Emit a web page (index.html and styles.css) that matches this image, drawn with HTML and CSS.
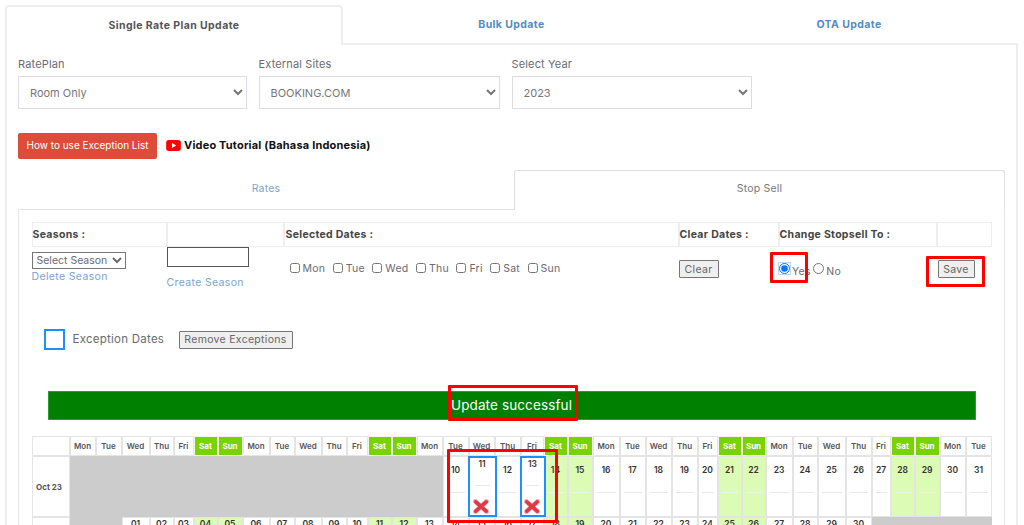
FILE: index.html
```html
<!DOCTYPE html>
<html lang="en">
<head>
<meta charset="utf-8">
<title>Rate Plan Update</title>
<link rel="stylesheet" href="styles.css">
</head>
<body>
<div class="page">
  <nav class="tabs">
    <a class="tab active">Single Rate Plan Update</a>
    <a class="tab">Bulk Update</a>
    <a class="tab">OTA Update</a>
  </nav>
  <section class="panel">
    <div class="filters">
      <label class="field"><span class="field-label">RatePlan</span>
        <select class="field-select"><option>Room Only</option></select></label>
      <label class="field"><span class="field-label">External Sites</span>
        <select class="field-select"><option>BOOKING.COM</option></select></label>
      <label class="field"><span class="field-label">Select Year</span>
        <select class="field-select"><option>2023</option></select></label>
    </div>
    <div class="tools">
      <button class="help-btn">How to use Exception List</button>
      <a class="video-link">
        <svg class="yt" viewBox="0 0 16 12" width="15" height="11"><rect width="16" height="12" rx="3" fill="#f00"/><path d="M6.3 3.3 11 6l-4.700 2.700z" fill="#fff"/></svg>
        Video Tutorial (Bahasa Indonesia)
      </a>
    </div>
    <div class="subtabs">
      <a class="subtab">Rates</a>
      <a class="subtab active">Stop Sell</a>
    </div>
    <div class="subpanel">
      <div class="form-table">
        <div class="th">Seasons :</div>
        <div class="th"></div>
        <div class="th th-dates">Selected Dates :</div>
        <div class="th">Clear Dates :</div>
        <div class="th">Change Stopsell To :</div>
        <div class="th"></div>
        <div class="td season-cell">
          <select class="season-select"><option>Select Season</option></select>
          <a class="link delete-link">Delete Season</a>
        </div>
        <div class="td create-cell">
          <input class="season-input" type="text">
          <a class="link create-link">Create Season</a>
        </div>
        <div class="td dates-cell">
          <label class="check"><input type="checkbox">Mon</label>
          <label class="check"><input type="checkbox">Tue</label>
          <label class="check"><input type="checkbox">Wed</label>
          <label class="check"><input type="checkbox">Thu</label>
          <label class="check"><input type="checkbox">Fri</label>
          <label class="check"><input type="checkbox">Sat</label>
          <label class="check"><input type="checkbox">Sun</label>
        </div>
        <div class="td btn-cell"><button class="plain-btn clear-btn">Clear</button></div>
        <div class="td radio-cell">
          <label class="radio"><input type="radio" name="stop" checked><span>Yes</span></label>
          <label class="radio"><input type="radio" name="stop"><span>No</span></label>
        </div>
        <div class="td btn-cell"><button class="plain-btn save-btn">Save</button></div>
      </div>

      <div class="legend">
        <span class="legend-box"></span>
        <span class="legend-text">Exception Dates</span>
        <button class="plain-btn remove-btn">Remove Exceptions</button>
      </div>

      <div class="banner">Update successful</div>

      <div class="calendar">
        <div class="c hd"></div>
        <div class="c hd">Mon</div><div class="c hd">Tue</div><div class="c hd">Wed</div><div class="c hd">Thu</div><div class="c hd">Fri</div><div class="c hd we">Sat</div><div class="c hd we">Sun</div>
        <div class="c hd">Mon</div><div class="c hd">Tue</div><div class="c hd">Wed</div><div class="c hd">Thu</div><div class="c hd">Fri</div><div class="c hd we">Sat</div><div class="c hd we">Sun</div>
        <div class="c hd">Mon</div><div class="c hd">Tue</div><div class="c hd">Wed</div><div class="c hd">Thu</div><div class="c hd">Fri</div><div class="c hd we">Sat</div><div class="c hd we">Sun</div>
        <div class="c hd">Mon</div><div class="c hd">Tue</div><div class="c hd">Wed</div><div class="c hd">Thu</div><div class="c hd">Fri</div><div class="c hd we">Sat</div><div class="c hd we">Sun</div>
        <div class="c hd">Mon</div><div class="c hd">Tue</div><div class="c hd">Wed</div><div class="c hd">Thu</div><div class="c hd">Fri</div><div class="c hd we">Sat</div><div class="c hd we">Sun</div>
        <div class="c hd">Mon</div><div class="c hd">Tue</div>

        <div class="c month">Oct 23</div>
        <div class="off span15"></div>
        <div class="c day"><b>10</b><i></i></div>
        <div class="c day exc"><b>11</b><i></i><svg class="x" viewBox="0 0 16 15" width="16" height="15"><use href="#cross"/></svg></div>
        <div class="c day"><b>12</b><i></i></div>
        <div class="c day exc"><b>13</b><i></i><svg class="x" viewBox="0 0 16 15" width="16" height="15"><use href="#cross"/></svg></div>
        <div class="c day wk"><b>14</b><i></i></div>
        <div class="c day wk"><b>15</b><i></i></div>
        <div class="c day"><b>16</b><i></i></div><div class="c day"><b>17</b><i></i></div><div class="c day"><b>18</b><i></i></div><div class="c day"><b>19</b><i></i></div><div class="c day"><b>20</b><i></i></div>
        <div class="c day wk"><b>21</b><i></i></div><div class="c day wk"><b>22</b><i></i></div>
        <div class="c day"><b>23</b><i></i></div><div class="c day"><b>24</b><i></i></div><div class="c day"><b>25</b><i></i></div><div class="c day"><b>26</b><i></i></div><div class="c day"><b>27</b><i></i></div>
        <div class="c day wk"><b>28</b><i></i></div><div class="c day wk"><b>29</b><i></i></div>
        <div class="c day"><b>30</b><i></i></div><div class="c day"><b>31</b><i></i></div>

        <div class="c month">Nov 23</div>
        <div class="off span2"></div>
        <div class="c day top"><b>01</b><i></i></div><div class="c day top"><b>02</b><i></i></div><div class="c day top"><b>03</b><i></i></div>
        <div class="c day top wk"><b>04</b><i></i></div><div class="c day top wk"><b>05</b><i></i></div>
        <div class="c day top"><b>06</b><i></i></div><div class="c day top"><b>07</b><i></i></div><div class="c day top"><b>08</b><i></i></div><div class="c day top"><b>09</b><i></i></div><div class="c day top"><b>10</b><i></i></div>
        <div class="c day top wk"><b>11</b><i></i></div><div class="c day top wk"><b>12</b><i></i></div>
        <div class="c day top"><b>13</b><i></i></div><div class="c day top"><b>14</b><i></i></div><div class="c day top"><b>15</b><i></i></div><div class="c day top"><b>16</b><i></i></div><div class="c day top"><b>17</b><i></i></div>
        <div class="c day top wk"><b>18</b><i></i></div><div class="c day top wk"><b>19</b><i></i></div>
        <div class="c day top"><b>20</b><i></i></div><div class="c day top"><b>21</b><i></i></div><div class="c day top"><b>22</b><i></i></div><div class="c day top"><b>23</b><i></i></div><div class="c day top"><b>24</b><i></i></div>
        <div class="c day top wk"><b>25</b><i></i></div><div class="c day top wk"><b>26</b><i></i></div>
        <div class="c day top"><b>27</b><i></i></div><div class="c day top"><b>28</b><i></i></div><div class="c day top"><b>29</b><i></i></div><div class="c day top"><b>30</b><i></i></div>
        <div class="off span5"></div>
      </div>
    </div>
  </section>
</div>

<span class="mark mark-yes"></span>
<span class="mark mark-save"></span>
<span class="mark mark-update"></span>
<span class="mark mark-dates"></span>

<svg class="defs" width="0" height="0">
  <defs>
    <g id="cross">
      <path d="M2.500 2.500 13.500 12.500M13.500 2.500 2.500 12.500" stroke="#eeb0b4" stroke-width="5" stroke-linecap="round"/>
      <path d="M2.800 2.800 13.200 12.200M13.200 2.800 2.800 12.200" stroke="#dc3a46" stroke-width="3.600" stroke-linecap="round"/>
    </g>
  </defs>
</svg>
</body>
</html>
```

FILE: styles.css
```css
* { box-sizing: border-box; }
html, body { height: 100%; overflow: hidden; }
body {
  margin: 0;
  background: #fff;
  font-family: Inter, "Noto Sans", "Liberation Sans", sans-serif;
  font-size: 11px;
  color: #6a6a72;
}
.page { padding: 5px 6px 0 5px; }

.tabs { display: grid; grid-template-columns: 338px 337px 338px; height: 40px; }
.tab {
  display: flex; align-items: center; justify-content: center;
  font-size: 10.500px; font-weight: 700; color: #4f8dc2; letter-spacing: .4px;
  border-bottom: 2px solid #eee;
}
.tab.active {
  color: #555;
  padding-bottom: 2px;
  border: 2px solid #eee; border-bottom: 0;
  border-radius: 4px 4px 0 0;
}

.panel { border: solid #eee; border-width: 0 2px; padding: 0 11px; }
.filters { display: grid; grid-template-columns: 228.500px 241px 240px; column-gap: 12px; padding-top: 11px; }
.field { display: block; }
.field-label { display: block; height: 16px; line-height: 16px; font-size: 11px; letter-spacing: .15px; }
.field-select {
  display: block; width: 100%; height: 33px; margin-top: 4px; padding: 0 7px;
  background: #fff; border: 1px solid #dcdce6; border-radius: 0;
  font: 11px Inter, sans-serif; color: #777;
}
.tools { display: flex; align-items: center; gap: 9px; height: 26px; margin-top: 24px; }
.help-btn {
  width: 139px; height: 26px; padding: 0 0 2px;
  background: #dd4b39; border: 0; border-radius: 2px;
  color: #fff; font: 10px Inter, sans-serif;
}
.video-link {
  display: flex; align-items: center; gap: 3px; padding-bottom: 2px;
  font-size: 11px; font-weight: 700; color: #111; letter-spacing: .18px;
}

.subtabs { display: grid; grid-template-columns: 496px 491px; height: 40px; margin-top: 11px; }
.subtab {
  display: flex; align-items: center; justify-content: center;
  padding-bottom: 2px;
  font-size: 10.500px; color: #7aa5cc; letter-spacing: .2px;
  border-bottom: 1.500px solid #e4e4e4;
}
.subtab.active {
  color: #777;
  padding-bottom: 4px;
  border: 1.500px solid #e0e0e0; border-bottom: 0;
  border-radius: 3px 3px 0 0;
}
.subpanel { border: solid #e6e6e6; border-width: 0 1.500px; padding: 12px 0 0 12.500px; }

.form-table {
  display: grid;
  grid-template-columns: 135px 117px 395px 100px 158px 55px;
  width: 960px;
}
.th {
  height: 25px; line-height: 23px;
  border: 1px solid #eee;
  font-size: 10.500px; font-weight: 700; color: #444; letter-spacing: .3px;
}
.th-dates { padding-left: 1px; }
.td { height: 43px; font-size: 10.500px; letter-spacing: .25px; }
.link { display: block; height: 14px; line-height: 14px; color: #7aa5cc; font-size: 10.500px; letter-spacing: .35px; }
.season-cell { padding-top: 5px; }
.delete-link { margin-top: 1px; }
.season-select {
  display: block; width: 94px; height: 17px; padding: 0;
  background: #fff; border: 1px solid #767676; border-radius: 0;
  font: 10.500px Inter, sans-serif; color: #6a6a72;
}
.season-input { display: block; width: 82px; height: 20px; border: 1px solid #555; padding: 0; }
.create-link { margin-top: 9px; }
.dates-cell { display: flex; align-items: flex-start; gap: 7.500px; padding: 14px 0 0 6px; }
.check { display: flex; align-items: center; gap: 3px; height: 14px; }
.check input, .radio input { width: 10px; height: 10px; margin: 0; }
.btn-cell { padding-top: 13px; }
.plain-btn {
  display: block; height: 18px; padding: 0;
  background: #efefef; border: 1px solid #767676; border-radius: 1px;
  font: 10.500px Inter, sans-serif; color: #666; letter-spacing: .3px;
}
.clear-btn { width: 40px; }
.save-btn { width: 37px; margin-left: 1px; }
.radio-cell { display: flex; align-items: flex-start; gap: 2px; padding-top: 16px; }
.radio { display: flex; align-items: flex-start; gap: 2.500px; height: 14px; }
.radio span { padding-top: 2px; }
.radio input { width: 11px; height: 11px; }
.radio input:checked { box-shadow: 0 0 0 1px #bcd9ff; border-radius: 50%; }

.legend { display: flex; align-items: center; margin: 39px 0 0 12px; height: 21px; }
.legend-box { width: 21px; height: 21px; border: 2px solid #1e8fff; }
.legend-text { margin-left: 8px; padding-bottom: 2px; font-size: 11.500px; letter-spacing: .25px; width: 106px; }
.remove-btn { width: 114px; }

.banner {
  width: 928px; height: 29px; margin: 41px 0 0 16px;
  background: #008000; border: 1px solid #2f9a2f;
  line-height: 27px; text-align: center; color: #fff; font-size: 13.500px; letter-spacing: .12px;
}

.calendar {
  display: grid;
  width: 960px;
  margin-top: 16px;
  grid-template-columns: 38px 26px 26px 28px 24px 20px 24px 25px 27px 25px 27px 25px 21px 24px 25px 26px 26px 26px 26px 23px 24px 25px 27px 26px 26px 26px 20px 24px 24px 27px 25px 28px 26px 19px 24px 25px 26px 26px;
  grid-template-rows: 20px 61px 60px;
}
.c { border: 1px solid #e4e4e4; background: #fff; }
.hd {
  display: flex; align-items: center; justify-content: center;
  font-size: 8px; font-weight: 600; color: #555;
}
.hd.we { background: #77d400; color: #fff; font-weight: 700; border-color: #f4f4f4; }
.month { display: flex; align-items: center; justify-content: center; padding-right: 3px; font-size: 8px; font-weight: 700; color: #555; }
.off { background: #ccc; }
.span15 { grid-column: span 15; }
.span2 { grid-column: span 2; }
.span5 { grid-column: span 5; }
.day { position: relative; padding-top: 7px; text-align: center; }
.day b { display: block; height: 12px; line-height: 12px; font-size: 8.500px; font-weight: 600; color: #333; }
.day i { display: block; height: 1px; margin: 16px 3px 0; background: #e8e8e8; }
.day.top { padding-top: 0; }
.wk { background: #dcfbb4; }
.wk i { background: #eef5e0; }
.exc { z-index: 1; margin: 0 -2px 0 -1px; border: 2px solid #1e8fff; padding-top: 0; }
.exc i { margin: 15px 5px 0; }
.x { position: absolute; left: 50%; bottom: 1px; margin-left: -9px; }

.mark { z-index: 2; position: absolute; border: 3px solid #f00; border-radius: 1px; }
.mark-yes { left: 770px; top: 252px; width: 38px; height: 31px; }
.mark-save { left: 926px; top: 256px; width: 59px; height: 31px; }
.mark-update { left: 448px; top: 385px; width: 130px; height: 36px; }
.mark-dates { left: 447px; top: 449px; width: 111px; height: 74px; }
.defs { position: absolute; }
```
